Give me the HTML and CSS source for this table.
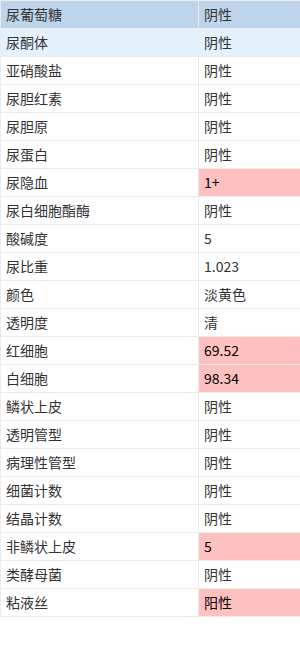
FILE: index.html
```html
<!DOCTYPE html>
<html>
<head>
<meta charset="utf-8">
<link rel="stylesheet" href="styles.css">
</head>
<body>
<table class="grid">
  <tr class="head"><td class="name">尿葡萄糖</td><td class="val">阴性</td></tr>
  <tr class="hover"><td class="name">尿酮体</td><td class="val">阴性</td></tr>
  <tr><td class="name">亚硝酸盐</td><td class="val">阴性</td></tr>
  <tr><td class="name">尿胆红素</td><td class="val">阴性</td></tr>
  <tr><td class="name">尿胆原</td><td class="val">阴性</td></tr>
  <tr><td class="name">尿蛋白</td><td class="val">阴性</td></tr>
  <tr><td class="name">尿隐血</td><td class="val abn">1+</td></tr>
  <tr><td class="name">尿白细胞酯酶</td><td class="val">阴性</td></tr>
  <tr><td class="name">酸碱度</td><td class="val">5</td></tr>
  <tr><td class="name">尿比重</td><td class="val">1.023</td></tr>
  <tr><td class="name">颜色</td><td class="val">淡黄色</td></tr>
  <tr><td class="name">透明度</td><td class="val">清</td></tr>
  <tr><td class="name">红细胞</td><td class="val abn">69.52</td></tr>
  <tr><td class="name">白细胞</td><td class="val abn">98.34</td></tr>
  <tr><td class="name">鳞状上皮</td><td class="val">阴性</td></tr>
  <tr><td class="name">透明管型</td><td class="val">阴性</td></tr>
  <tr><td class="name">病理性管型</td><td class="val">阴性</td></tr>
  <tr><td class="name">细菌计数</td><td class="val">阴性</td></tr>
  <tr><td class="name">结晶计数</td><td class="val">阴性</td></tr>
  <tr><td class="name">非鳞状上皮</td><td class="val abn">5</td></tr>
  <tr><td class="name">类酵母菌</td><td class="val">阴性</td></tr>
  <tr><td class="name">粘液丝</td><td class="val abn">阳性</td></tr>
</table>
</body>
</html>
```
FILE: styles.css
```css
html, body {
  margin: 0;
  padding: 0;
  background: #fff;
}
body {
  font-family: "Noto Sans CJK SC", "Noto Sans", sans-serif;
  font-size: 14px;
  color: #333;
}
.grid {
  border-collapse: collapse;
  width: 301px;
  table-layout: fixed;
}
.grid td {
  border: 1px solid #ebebeb;
  height: 27px;
  padding: 0 0 0 5px;
  line-height: 27px;
  white-space: nowrap;
  overflow: hidden;
}
.grid .name {
  width: 192px;
}
.grid .head td {
  background: #bdd4eb;
}
.grid .hover td {
  background: #e3f1fd;
}
.grid .abn {
  background: #ffc0c0;
  color: #000;
}
```
